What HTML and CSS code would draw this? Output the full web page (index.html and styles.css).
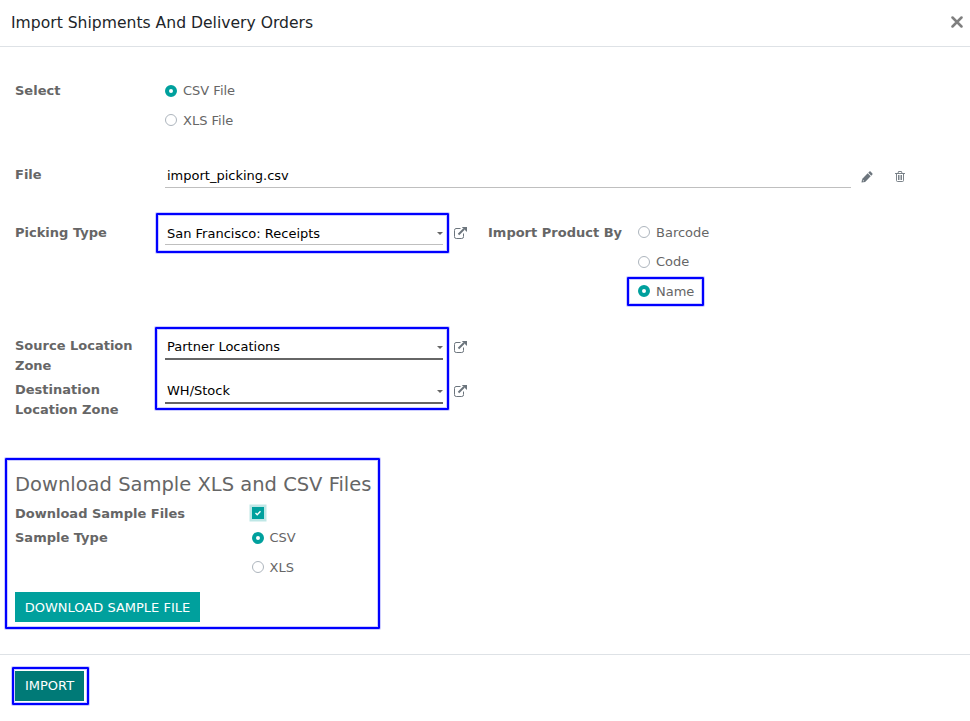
FILE: index.html
```
<!DOCTYPE html>
<html lang="en">
<head>
<meta charset="utf-8">
<title>Import Shipments And Delivery Orders</title>
<link rel="stylesheet" href="styles.css">
</head>
<body>
<svg width="0" height="0" class="defs">
  <symbol id="external" viewBox="0 0 14 14">
    <path d="M7.500 2.500H3A1.800 1.800 0 0 0 1.500 4.500v6a1.800 1.800 0 0 0 1.800 2h5.400a1.800 1.800 0 0 0 1.800-2V7.500" fill="none" stroke="currentColor"/>
    <path d="M5.500 8.500 11 3" stroke="currentColor" stroke-width="2" fill="none"/>
    <path d="M8.800 1H14v5z" fill="currentColor"/>
  </symbol>
</svg>
<header class="header">
  <h1>Import Shipments And Delivery Orders</h1>
  <button class="close" aria-label="Close"><svg width="12" height="12" viewBox="0 0 12 12"><path d="M1.500 1.500l9 9m0-9l-9 9" stroke="currentColor" stroke-width="2.500" stroke-linecap="round"/></svg></button>
</header>
<main class="body">
  <section class="row select-row">
    <div class="label">Select</div>
    <div class="radios">
      <label class="radio"><i class="dot on"></i>CSV File</label>
      <label class="radio raised"><i class="dot"></i>XLS File</label>
    </div>
  </section>
  <section class="row file-row">
    <div class="label">File</div>
    <div class="field file">import_picking.csv</div>
    <svg class="pencil" width="12" height="12" viewBox="0 0 12 12"><path d="M.5 11.500l.6-3.600L6.700 2.300l3 3-5.600 5.600zM7.300 1.700l1.100-1.100q.6-.5 1.200 0l1.800 1.800q.5.600 0 1.200l-1.100 1.100z" fill="currentColor"/><path d="M1.700 9l1.300 1.300" stroke="#fff" stroke-width=".8"/></svg>
    <svg class="trash" width="12" height="12" viewBox="0 0 12 12"><path d="M1 3.500h10M4 3.400l.5-1.900h3L8 3.400M2.500 3.500v7q0 1 1 1h5q1 0 1-1v-7M4.500 5v5M6 5v5M7.500 5v5" fill="none" stroke="currentColor" stroke-width=".9"/></svg>
  </section>
  <div class="columns">
    <section class="row picking">
      <div class="label">Picking Type</div>
      <div class="field mark mark-picking">San Francisco: Receipts<i class="caret"></i></div>
      <svg class="ext"><use href="#external"/></svg>
    </section>
    <section class="row product">
      <div class="label">Import Product By</div>
      <div class="radios">
        <label class="radio raised"><i class="dot"></i>Barcode</label>
        <label class="radio code"><i class="dot"></i>Code</label>
        <label class="radio raised mark mark-name"><i class="dot on"></i>Name</label>
      </div>
    </section>
  </div>
  <section class="locations">
    <div class="row">
      <div class="label">Source Location Zone</div>
      <div class="field required mark mark-locations">Partner Locations<i class="caret"></i></div>
      <svg class="ext"><use href="#external"/></svg>
    </div>
    <div class="row">
      <div class="label">Destination Location Zone</div>
      <div class="field required">WH/Stock<i class="caret"></i></div>
      <svg class="ext"><use href="#external"/></svg>
    </div>
  </section>
  <section class="sample mark mark-sample">
    <h2>Download Sample XLS and CSV Files</h2>
    <div class="row">
      <div class="label">Download Sample Files</div>
      <span class="check"><svg width="12" height="12" viewBox="0 0 12 12"><path d="M3.500 6l1.700 1.700L8.500 4.300" fill="none" stroke="#fff" stroke-width="1.400"/></svg></span>
    </div>
    <div class="row type">
      <div class="label">Sample Type</div>
      <div class="radios">
        <label class="radio"><i class="dot on"></i>CSV</label>
        <label class="radio raised"><i class="dot"></i>XLS</label>
      </div>
    </div>
    <button class="btn download">DOWNLOAD SAMPLE FILE</button>
  </section>
</main>
<footer class="footer">
  <div class="mark mark-import"><button class="btn import">IMPORT</button></div>
</footer>
</body>
</html>
```
FILE: styles.css
```
*, *::after { box-sizing: border-box; }
body {
  margin: 0;
  background: #fff;
  color: #666;
  font: 13px/20px "DejaVu Sans", sans-serif;
}
.defs { position: absolute; }
h1, h2 { margin: 0; font-weight: 400; white-space: nowrap; }
button { border: 0; padding: 0; font: inherit; }
.header {
  display: flex;
  justify-content: space-between;
  align-items: center;
  height: 47px;
  padding: 0 7px 0 11px;
  border-bottom: 1px solid #dee2e6;
}
h1 { font-size: 15.600px; color: #212529; }
.close { display: flex; margin-bottom: 2px; background: none; color: #7f7f7f; }
.body { padding: 34px 15px 0; height: 607px; }
.row { display: flex; align-items: flex-start; }
.label { width: 150px; flex: none; padding-right: 20px; font-weight: 700; }
.radios { display: flex; flex-direction: column; align-items: flex-start; gap: 10px; }
.radio { display: flex; align-items: center; gap: 6px; height: 20px; white-space: nowrap; }
.code { margin-top: -1px; }
.dot {
  width: 12px;
  height: 12px;
  flex: none;
  border: 1px solid #adb5bd;
  border-radius: 50%;
  background: #fff;
}
.dot.on { border: 4px solid #00a09d; }
.raised .dot { margin-bottom: 2px; }
.select-row { height: 50px; }
.file-row { margin-top: 34px; height: 24px; }
.field {
  width: 278px;
  height: 22px;
  padding-left: 2px;
  border-bottom: 1px solid #bfbfbf;
  color: #000;
  line-height: 22px;
  position: relative;
}
.file { width: 686px; height: 23px; }
.required { height: 24px; border-bottom: 2px solid #666; }
.caret {
  position: absolute;
  right: 0;
  top: 9px;
  border: 3px solid transparent;
  border-top-color: #666;
  border-bottom: 0;
}
.required .caret { top: 10px; }
.pencil { margin: 6px 0 0 10px; color: #6c757d; }
.trash { margin: 5px 0 0 21px; color: #6c757d; }
.ext { width: 14px; height: 14px; margin: 3px 0 0 10px; color: #6c757d; }
.columns { display: flex; margin-top: 34px; }
.picking { width: 473px; }
.product .label { padding-right: 0; }
.locations { display: flex; flex-direction: column; gap: 4px; margin-top: 34px; }
.locations .row { height: 40px; }
.locations .ext { margin-top: 4px; }
.sample { margin-top: 50px; }
h2 { font-size: 19.500px; line-height: 30px; }
.sample .label { width: 237px; }
.sample .radio { gap: 5.500px; }
.sample > .row { margin-top: 4px; }
.check {
  display: flex;
  width: 12px;
  height: 12px;
  margin-top: 3px;
  background: #00a09d;
  box-shadow: 0 0 0 2.500px #bfe7e6;
}
.btn { height: 30px; display: block; color: #fff; background: #00a09d; }
.download { width: 185px; margin-top: 14px; line-height: 32px; }
.import { width: 69px; background: #007a77; }
.footer { display: flex; align-items: flex-start; height: 67px; padding: 16px 15px; border-top: 1px solid #dee2e6; }

/* Highlight frames drawn over the form */
.mark { position: relative; }
.mark::after {
  content: "";
  position: absolute;
  border: 2px solid #00f;
  border-radius: 1px;
  box-shadow: 0 0 0 1px #00f3, inset 0 0 0 1px #00f3;
  pointer-events: none;
}
.mark-picking::after { inset: -10px -6px -9px -9px; }
.mark-locations::after { inset: -9px -6px -52px -10px; }
.mark-name::after { top: -5px; left: -11px; width: 77px; height: 29px; }
.mark-sample::after { top: -12px; left: -10px; width: 375px; height: 171px; }
.mark-import::after { inset: -4px -5px -4px -3px; }
```
